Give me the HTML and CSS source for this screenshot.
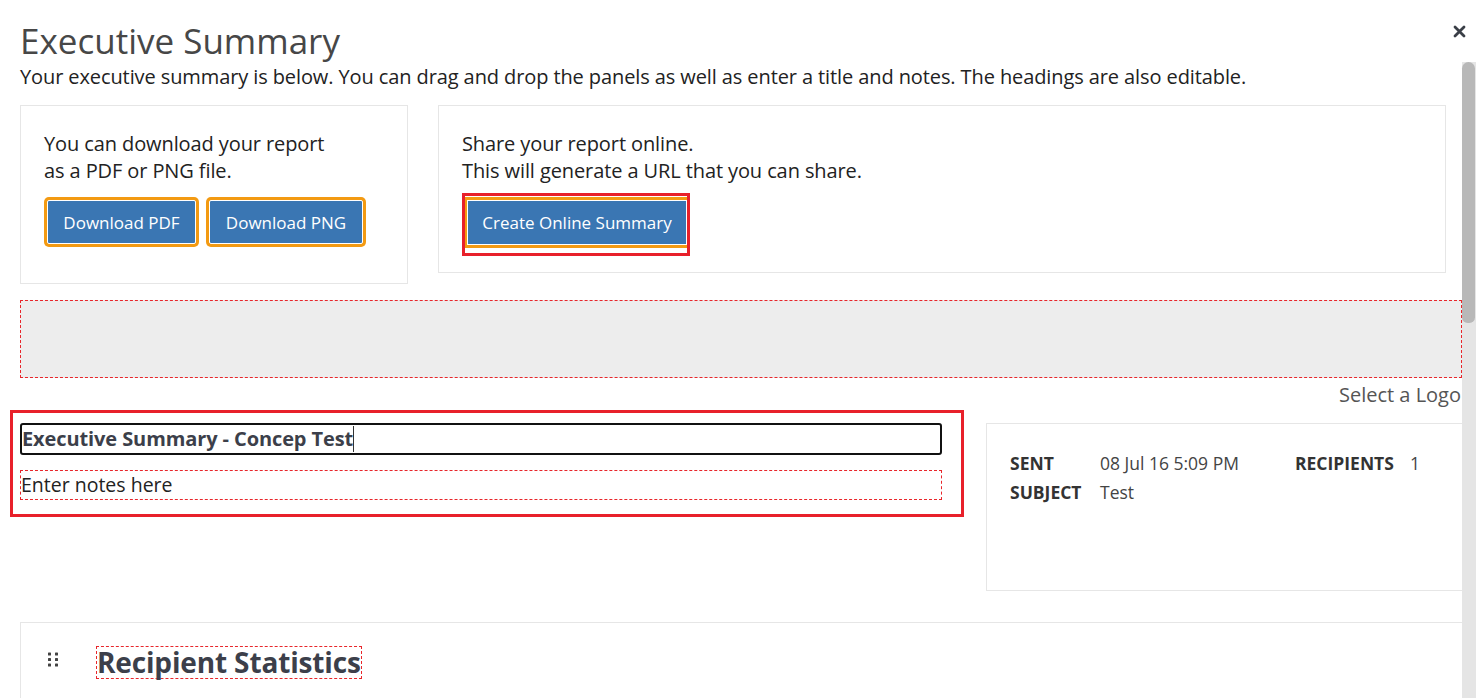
FILE: index.html
```html
<!DOCTYPE html>
<html lang="en">
<head>
<meta charset="utf-8">
<title>Executive Summary</title>
<link rel="stylesheet" href="styles.css">
</head>
<body>
<div class="modal">
  <div class="content">
    <h1 class="title">Executive Summary</h1>
    <p class="lead">Your executive summary is below. You can drag and drop the panels as well as enter a title and notes. The headings are also editable.</p>

    <div class="top-row">
      <div class="panel panel-download">
        <p class="panel-text">You can download your report<br>as a PDF or PNG file.</p>
        <div class="btn-row">
          <button class="btn btn-focus">Download PDF</button>
          <button class="btn btn-focus">Download PNG</button>
        </div>
      </div>
      <div class="panel panel-share">
        <p class="panel-text">Share your report online.<br>This will generate a URL that you can share.</p>
        <div class="highlight-box">
          <button class="btn btn-create">Create Online Summary</button>
        </div>
      </div>
    </div>

    <div class="logo-drop"></div>
    <div class="logo-select">Select a Logo</div>

    <div class="summary-row">
      <div class="title-block">
        <div class="title-input">Executive Summary - Concep Test<span class="caret"></span></div>
        <div class="notes">Enter notes here</div>
      </div>
      <div class="stats-panel">
        <div class="stats-grid">
          <span class="label">SENT</span><span class="value">08 Jul 16 5:09 PM</span>
          <span class="label">RECIPIENTS</span><span class="value">1</span>
          <span class="label">SUBJECT</span><span class="value">Test</span>
        </div>
      </div>
    </div>

    <div class="section-panel">
      <div class="section-head">
        <svg class="drag" width="11" height="16" viewBox="0 0 11 16" aria-hidden="true">
          <rect x="0" y="0.5" width="3" height="3" rx="0.6" fill="#444"/>
          <rect x="7" y="0.5" width="3" height="3" rx="0.6" fill="#444"/>
          <rect x="0" y="6" width="3" height="3" rx="0.6" fill="#444"/>
          <rect x="7" y="6" width="3" height="3" rx="0.6" fill="#444"/>
          <rect x="0" y="11.5" width="3" height="3" rx="0.6" fill="#444"/>
          <rect x="7" y="11.5" width="3" height="3" rx="0.6" fill="#444"/>
        </svg>
        <h2 class="section-title">Recipient Statistics</h2>
      </div>
    </div>
  </div>
  <div class="scrollbar"><div class="thumb"></div></div>
  <button class="close" aria-label="Close">
    <svg width="13" height="13" viewBox="0 0 13 13"><path d="M2 2 L11 11 M11 2 L2 11" stroke="#3a3f47" stroke-width="2.8" stroke-linecap="round"/></svg>
  </button>
</div>
</body>
</html>
```

FILE: styles.css
```css
* { box-sizing: border-box; }
html, body {
  margin: 0;
  padding: 0;
  background: #fff;
  height: 698px;
  overflow: hidden;
}
body {
  font-family: "Open Sans", "Noto Sans", "DejaVu Sans", sans-serif;
  color: #222;
}
.modal {
  position: relative;
  display: flex;
  width: 1476px;
  height: 698px;
  overflow: hidden;
}
.content {
  width: 1462px;
  flex: none;
  padding: 17px 0 0 20px;
  overflow: hidden;
}
.title {
  margin: 0;
  font-size: 35px;
  font-weight: 400;
  line-height: 48px;
  color: #474747;
}
.lead {
  margin: 0;
  font-size: 20px;
  line-height: 24px;
  color: #222;
  letter-spacing: -0.1px;
}
.top-row {
  display: flex;
  align-items: flex-start;
  gap: 30px;
  margin-top: 16px;
}
.panel {
  border: 1px solid #e6e6e6;
  padding: 24px 23px 0 23px;
}
.panel-download { width: 388px; height: 179px; }
.panel-share { width: 1008px; height: 168px; }
.panel-text {
  margin: 0;
  font-size: 20px;
  line-height: 27px;
  color: #222;
  letter-spacing: -0.1px;
}
.btn-row {
  display: flex;
  gap: 13px;
  margin-top: 16px;
  padding-left: 3px;
}
.btn {
  font-family: inherit;
  font-size: 17px;
  color: #fff;
  background: #3a76b3;
  cursor: pointer;
}
.btn-focus {
  height: 44px;
  padding: 0;
  border: 1px solid #fff;
  border-radius: 2px;
  box-shadow: 0 0 0 3px #f39a12;
}
.btn-focus:first-child { width: 149px; }
.btn-focus:last-child { width: 154px; }
.highlight-box {
  display: inline-flex;
  margin-top: 9px;
  width: 228px;
  height: 63px;
  border: 3px solid #e8202a;
  padding: 1px 0 4px 0;
  overflow: hidden;
}
.btn-create {
  width: 222px;
  height: 51px;
  padding: 0;
  border: 3px solid #f39a12;
  border-right: 0;
  border-left-width: 2px;
  box-shadow: inset 0 0 0 1px #fff;
}
.logo-drop {
  margin-top: 16px;
  height: 78px;
  background: #ededed;
  border: 1px dashed #e8262b;
}
.logo-select {
  text-align: right;
  font-size: 20px;
  line-height: 32px;
  color: #555;
  padding: 1px 1px 0 0;
  height: 32px;
}
.summary-row {
  display: flex;
  align-items: flex-start;
  gap: 22px;
  margin-left: -10px;
}
.title-block {
  width: 954px;
  flex: none;
  border: 3px solid #e8202a;
  padding: 10px 19px 14px 7px;
  display: flex;
  flex-direction: column;
  gap: 15px;
}
.title-input {
  height: 32px;
  border: 2px solid #111;
  border-radius: 3px;
  font-size: 20px;
  font-weight: 700;
  line-height: 28px;
  color: #3c3f4a;
  letter-spacing: -0.1px;
  white-space: nowrap;
}
.caret {
  display: inline-block;
  width: 1px;
  height: 26px;
  background: #333;
  vertical-align: middle;
  margin-top: -4px;
}
.notes {
  height: 30px;
  border: 1px dashed #e8262b;
  font-size: 19.5px;
  line-height: 28px;
  color: #222;
}
.stats-panel {
  flex: 1;
  margin-top: 13px;
  height: 168px;
  border: 1px solid #e6e6e6;
  border-right: 0;
  padding: 24px 0 0 23px;
}
.stats-grid {
  display: grid;
  grid-template-columns: 90px 195px 115px 1fr;
  grid-auto-rows: 29px;
  align-items: center;
  font-size: 17.5px;
}
.label { font-weight: 700; color: #333; }
.value { color: #444; }
.section-panel {
  margin-top: 31px;
  height: 200px;
  border: 1px solid #e6e6e6;
  border-right: 0;
}
.section-head {
  display: flex;
  align-items: flex-start;
  padding: 23px 0 0 27px;
}
.drag { margin-top: 6px; flex: none; }
.section-title {
  margin: 0 0 0 37px;
  font-size: 28px;
  font-weight: 700;
  line-height: 31px;
  color: #3c3f4a;
  border: 1px dashed #e8262b;
  padding: 0;
  letter-spacing: -0.15px;
}
.scrollbar {
  flex: none;
  width: 14px;
  margin-top: 62px;
  height: 636px;
  background: #e5e5e5;
  display: flex;
  flex-direction: column;
}
.thumb {
  height: 261px;
  width: 13px;
  background: #b8b8b8;
  border-radius: 7px 7px 6px 6px;
}
.close {
  position: absolute;
  top: 25px;
  right: 10px;
  border: 0;
  background: transparent;
  padding: 0;
  width: 13px;
  height: 13px;
  cursor: pointer;
  line-height: 0;
}
```
